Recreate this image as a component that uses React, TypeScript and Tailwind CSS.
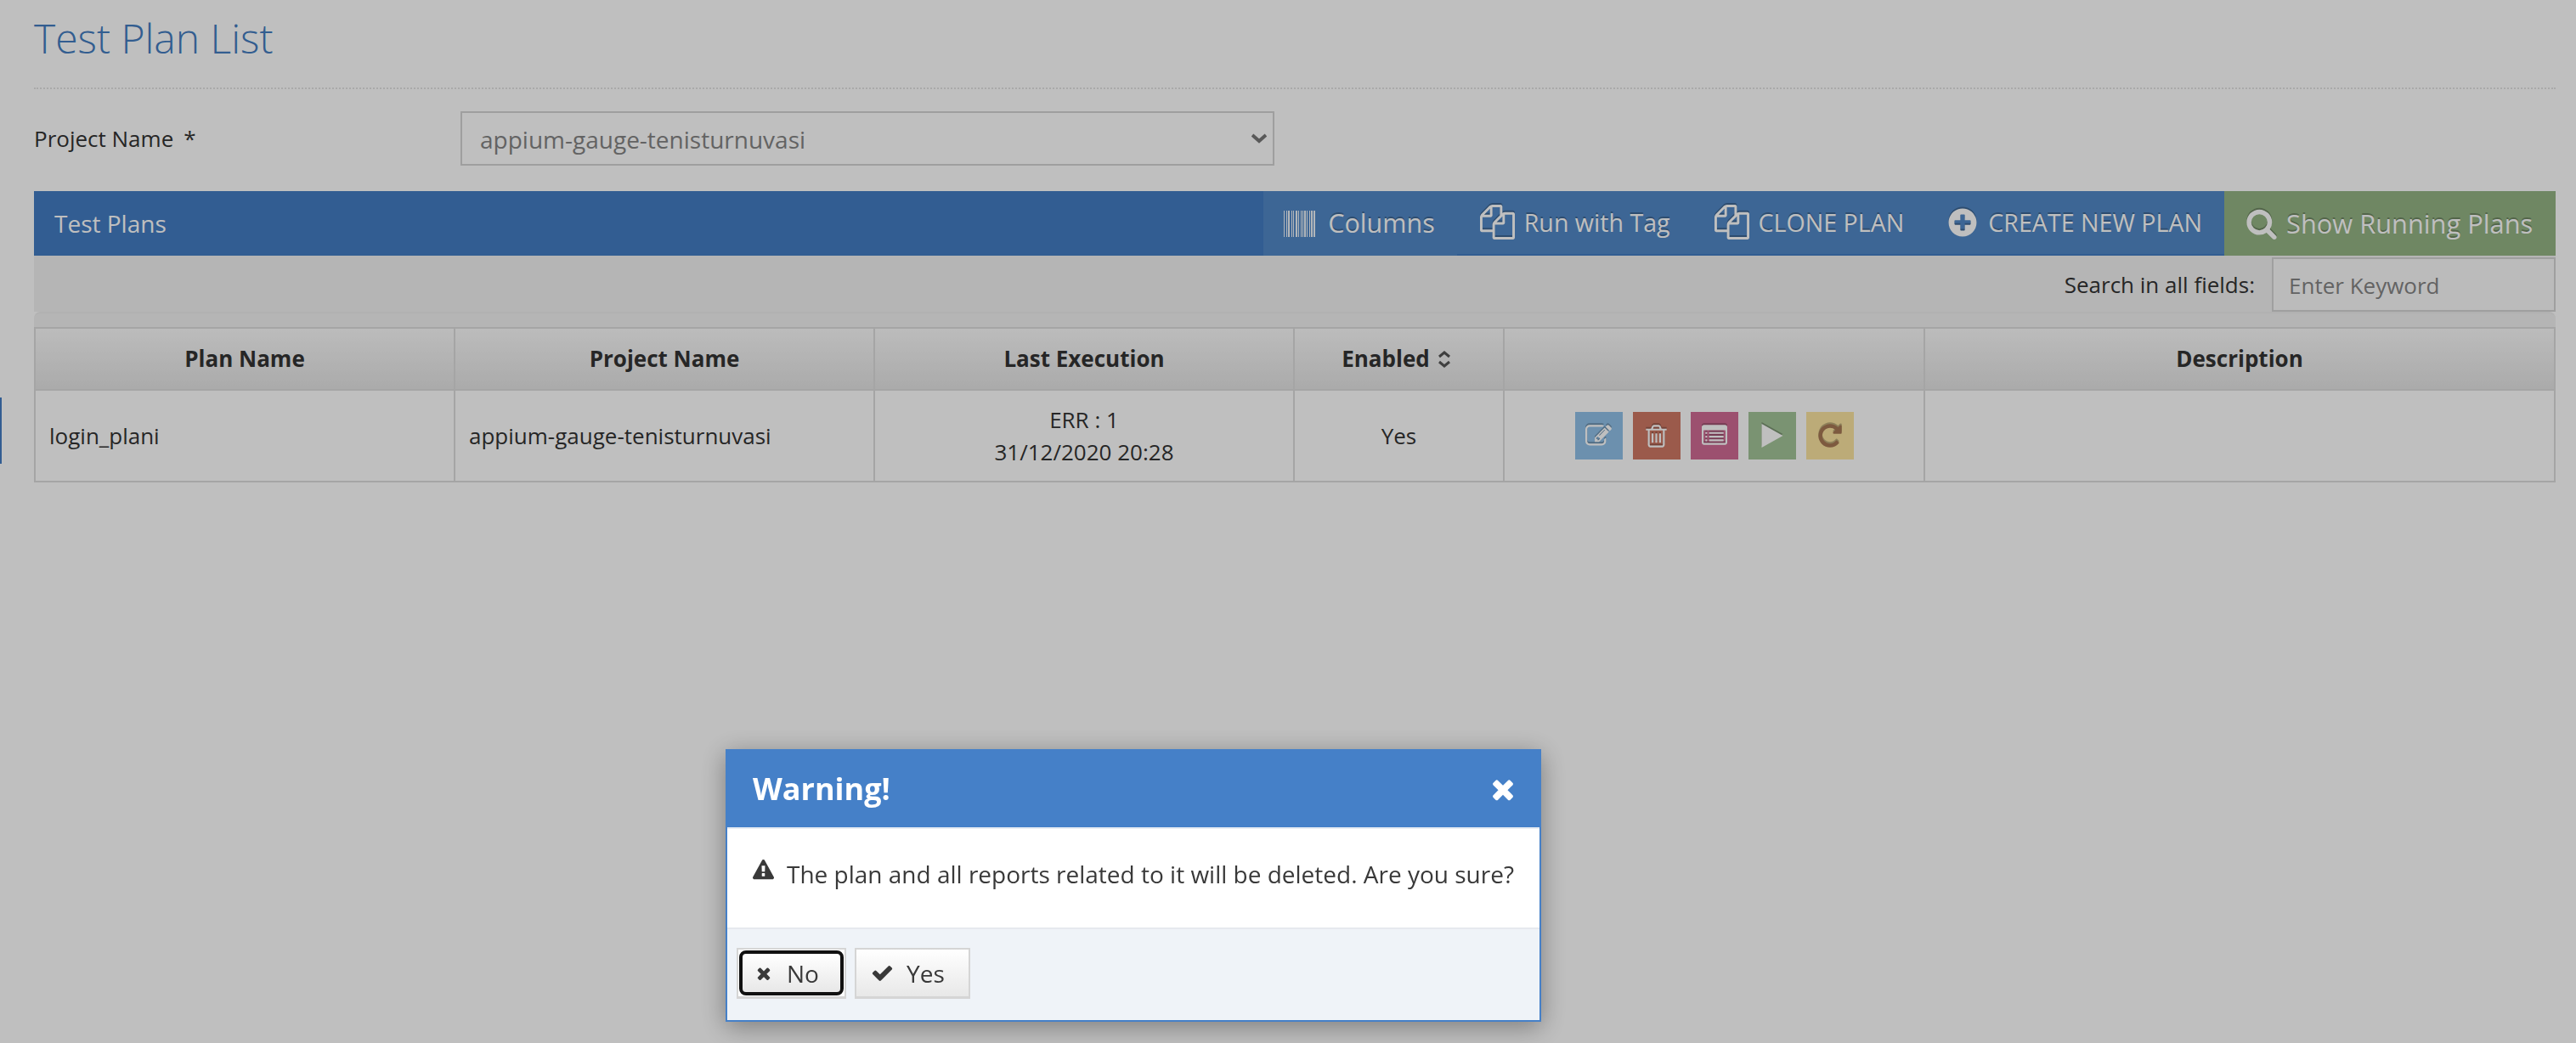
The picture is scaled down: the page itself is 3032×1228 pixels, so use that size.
import React from 'react'
import { FaPlusCircle } from 'react-icons/fa'

const FILES = 'M1696 384q40 0 68 28t28 68v1216q0 40-28 68t-68 28h-960q-40 0-68-28t-28-68v-288h-544q-40 0-68-28t-28-68v-672q0-40 20-88t48-76l408-408q28-28 76-48t88-20h416q40 0 68 28t28 68v328q68-40 128-40h416zm-544 213l-299 299h299v-299zm-640-384l-299 299h299v-299zm196 647l316-316v-416h-384v416q0 40-28 68t-68 28h-416v640h512v-256q0-40 20-88t48-76zm956 804v-1152h-384v416q0 40-28 68t-68 28h-416v640h896z'
const EDIT = 'M888 1184l116-116-152-152-116 116v56h96v96h56zm440-720q-16-16-33 1l-350 350q-17 17-1 33t33-1l350-350q17-17 1-33zm80 594v190q0 119-84.5 203.5t-203.5 84.5h-832q-119 0-203.5-84.5t-84.5-203.5v-832q0-119 84.5-203.5t203.5-84.5h832q63 0 117 25 15 7 18 23 3 17-9 29l-49 49q-14 14-32 8-23-6-45-6h-832q-66 0-113 47t-47 113v832q0 66 47 113t113 47h832q66 0 113-47t47-113v-126q0-13 9-22l64-64q15-15 35-7t20 29zm-96-738l288 288-672 672h-288v-288zm444 132l-92 92-288-288 92-92q28-28 68-28t68 28l152 152q28 28 28 68t-28 68z'
const TRASH = 'M704 736v576q0 14-9 23t-23 9h-64q-14 0-23-9t-9-23v-576q0-14 9-23t23-9h64q14 0 23 9t9 23zm256 0v576q0 14-9 23t-23 9h-64q-14 0-23-9t-9-23v-576q0-14 9-23t23-9h64q14 0 23 9t9 23zm256 0v576q0 14-9 23t-23 9h-64q-14 0-23-9t-9-23v-576q0-14 9-23t23-9h64q14 0 23 9t9 23zm128 724v-948h-896v948q0 22 7 40.5t14.5 27 10.5 8.5h832q3 0 10.5-8.5t14.5-27 7-40.5zm-672-1076h448l-48-117q-7-9-17-11h-317q-10 2-17 11zm928 32v64q0 14-9 23t-23 9h-96v948q0 83-47 143.5t-113 60.5h-832q-66 0-113-58.5t-47-141.5v-952h-96q-14 0-23-9t-9-23v-64q0-14 9-23t23-9h309l70-167q15-37 54-63t79-26h320q40 0 79 26t54 63l70 167h309q14 0 23 9t9 23z'
const LIST = 'M384 1184v64q0 13-9.5 22.5t-22.5 9.5h-64q-13 0-22.5-9.5t-9.5-22.5v-64q0-13 9.5-22.5t22.5-9.5h64q13 0 22.5 9.5t9.5 22.5zm0-256v64q0 13-9.5 22.5t-22.5 9.5h-64q-13 0-22.5-9.5t-9.5-22.5v-64q0-13 9.5-22.5t22.5-9.5h64q13 0 22.5 9.5t9.5 22.5zm0-256v64q0 13-9.5 22.5t-22.5 9.5h-64q-13 0-22.5-9.5t-9.5-22.5v-64q0-13 9.5-22.5t22.5-9.5h64q13 0 22.5 9.5t9.5 22.5zm1152 512v64q0 13-9.5 22.5t-22.5 9.5h-960q-13 0-22.5-9.5t-9.5-22.5v-64q0-13 9.5-22.5t22.5-9.5h960q13 0 22.5 9.5t9.5 22.5zm0-256v64q0 13-9.5 22.5t-22.5 9.5h-960q-13 0-22.5-9.5t-9.5-22.5v-64q0-13 9.5-22.5t22.5-9.5h960q13 0 22.5 9.5t9.5 22.5zm0-256v64q0 13-9.5 22.5t-22.5 9.5h-960q-13 0-22.5-9.5t-9.5-22.5v-64q0-13 9.5-22.5t22.5-9.5h960q13 0 22.5 9.5t9.5 22.5zm128 704v-832q0-13-9.5-22.5t-22.5-9.5h-1472q-13 0-22.5 9.5t-9.5 22.5v832q0 13 9.5 22.5t22.5 9.5h1472q13 0 22.5-9.5t9.5-22.5zm128-1088v1088q0 66-47 113t-113 47h-1472q-66 0-113-47t-47-113v-1088q0-66 47-113t113-47h1472q66 0 113 47t47 113z'
const REPEAT = 'M1664 256v448q0 26-19 45t-45 19h-448q-42 0-59-40-17-39 14-69l138-138q-148-137-349-137-104 0-198.5 40.5t-163.5 109.5-109.5 163.5-40.5 198.5 40.5 198.5 109.5 163.5 163.5 109.5 198.5 40.5q119 0 225-52t179-147q7-10 23-12 15 0 25 9l137 138q9 8 9.5 20.5t-7.5 22.5q-109 132-264 204.5t-327 72.5q-156 0-298-61t-245-164-164-245-61-298 61-298 164-245 245-164 298-61q147 0 284.5 55.5t244.5 156.5l130-129q29-31 70-14 39 17 39 59z'
const PLAY = 'M238 158 L1555 896 L238 1634 Z'
const TIMES = 'M1490 1322q0 40-28 68l-136 136q-28 28-68 28t-68-28l-294-294-294 294q-28 28-68 28t-68-28l-136-136q-28-28-28-68t28-68l294-294-294-294q-28-28-28-68t28-68l136-136q28-28 68-28t68 28l294 294 294-294q28-28 68-28t68 28l136 136q28 28 28 68t-28 68l-294 294 294 294q28 28 28 68z'
const CHECK = 'M1671 566q0 40-28 68l-724 724-136 136q-28 28-68 28t-68-28l-136-136-362-362q-28-28-28-68t28-68l136-136q28-28 68-28t68 28l294 295 656-657q28-28 68-28t68 28l136 136q28 28 28 68z'
const WARNING = 'M1024 1375v-190q0-14-9.5-23.5t-22.5-9.5h-192q-13 0-22.5 9.5t-9.5 23.5v190q0 14 9.5 23.5t22.5 9.5h192q13 0 22.5-9.5t9.5-23.5zm-2-374l18-459q0-12-10-19-13-11-24-11h-220q-11 0-24 11-10 7-10 21l17 457q0 10 10 16.5t24 6.5h185q14 0 23.5-6.5t10.5-16.5zm-14-934l768 1408q35 63-2 126-17 29-46.5 46t-63.5 17h-1536q-34 0-63.5-17t-46.5-46q-37-63-2-126l768-1408q17-31 47-49t65-18 65 18 47 49z'
const SEARCH = 'M1216 832q0-185-131.5-316.5t-316.5-131.5-316.5 131.5-131.5 316.5 131.5 316.5 316.5 131.5 316.5-131.5 131.5-316.5zm512 832q0 52-38 90t-90 38q-54 0-90-38l-343-342q-179 124-399 124-143 0-273.5-55.5t-225-150-150-225-55.5-273.5 55.5-273.5 150-225 225-150 273.5-55.5 273.5 55.5 225 150 150 225 55.5 273.5q0 220-124 399l343 343q37 37 37 90z'

const Glyph = ({ d, size, className }: { d: string; size: number; className?: string }) => (
    <svg viewBox="0 0 1792 1792" width={size} height={size} fill="currentColor" className={className}>
        <path d={d} />
    </svg>
)

// thin stripes of the barcode, [x, width]
const stripes = [[0, 1], [3, 1], [5, 2], [9, 1], [11, 1], [14, 2], [17, 1], [20, 1], [22, 1], [24, 2], [27, 1], [30, 1], [32, 2], [35, 2]]

const Barcode = () => (
    <svg viewBox="0 0 37 31" width="37" height="31" fill="currentColor" className="opacity-90">
        {stripes.map(([x, w]) => (
            <rect key={x} x={x} y="0" width={w} height="31" />
        ))}
    </svg>
)

const iconShadow = '[filter:drop-shadow(0_-2px_0_rgba(0,0,0,0.25))]'

const ToolbarItem = ({ icon, label, gap }: { icon: React.ReactNode; label: string; gap: string }) => (
    <div className={`flex items-center ${gap} text-[28.6px] text-white [text-shadow:0_-2px_0_rgba(0,0,0,0.25)]`}>
        {icon}
        <span>{label}</span>
    </div>
)

const ActionButton = ({ color, text, d, size }: { color: string; text: string; d: string; size: number }) => (
    <div className={`flex h-[56px] w-[56px] items-center justify-center ${color} ${text}`}>
        <Glyph d={d} size={size} className={iconShadow} />
    </div>
)

const headers = ['Plan Name', 'Project Name', 'Last Execution', 'Enabled', '', 'Description']

export default function App() {
    return (
        <div className="min-h-screen bg-white pl-10 pr-[24px] font-['Open_Sans',sans-serif] text-[26px] text-[#333]">
            <h1 className="flex h-[105px] items-start border-b-2 border-dotted border-[#e2e2e2] pt-[15px] text-[48px] leading-[60px] font-light text-[#437cc0]">
                Test Plan List
            </h1>
            <div className="mt-[26px] flex h-[64px] items-start">
                <label className="w-[502px] pt-[10px] text-[26px] leading-[44px]">
                    Project Name<span className="ml-[12px]">*</span>
                </label>
                <div className="relative h-[64px] w-[958px] border-2 border-[#d5d5d5] bg-white pl-[21px] text-[28px] leading-[62px] text-[#858585]">
                    appium-gauge-tenisturnuvasi
                    <svg viewBox="0 0 18 12" width="18" height="12" className="absolute top-[24px] right-[7px]" fill="none" stroke="#777" strokeWidth="4">
                        <path d="M1 2l8 7 8-7" />
                    </svg>
                </div>
            </div>

            <div className="mt-[30px] flex h-[76px] items-stretch bg-[#437cc3]">
                <div className="flex-1 pl-6 text-[28px] leading-[76px] text-white">Test Plans</div>
                <div className="flex bg-[#5289c7]">
                    <div className="flex items-center gap-[15px] pr-[26px] pl-[24px] text-[30.5px] text-white [text-shadow:0_-2px_0_rgba(0,0,0,0.25)]">
                        <Barcode />
                        <span>Columns</span>
                    </div>
                    <div className="flex items-center gap-[52px] border-b-2 border-[#437cc3] pr-[26px] pl-[27px]">
                        <ToolbarItem icon={<Glyph d={FILES} size={41} className={iconShadow} />} label="Run with Tag" gap="gap-[11px]" />
                        <ToolbarItem icon={<Glyph d={FILES} size={41} className={iconShadow} />} label="CLONE PLAN" gap="gap-[11px]" />
                        <ToolbarItem icon={<FaPlusCircle size={34} className={iconShadow} />} label="CREATE NEW PLAN" gap="gap-[13px]" />
                    </div>
                </div>
                <div className="flex w-[390px] items-center gap-[10px] bg-[#94b584] pl-[25px] text-[30.8px] text-white [text-shadow:0_-2px_0_rgba(0,0,0,0.25)]">
                    <Glyph d={SEARCH} size={38} className={iconShadow} />
                    <span>Show Running Plans</span>
                </div>
            </div>

            <div className="flex h-[66px] items-start justify-end bg-[#f2f2f2] pt-[2px]">
                <span className="mt-[14px] mr-[20px] leading-[36px]">Search in all fields:</span>
                <div className="h-[64px] w-[334px] border-2 border-[#d5d5d5] bg-[#fafafa] pl-[18px] text-[26px] leading-[62px] text-[#858585]">
                    Enter Keyword
                </div>
            </div>
            <div className="h-[18px] rounded-t-[8px] border-t-2 border-[#ededed] bg-[#f2f2f2]"></div>

            <table className="w-full table-fixed border-collapse">
                <colgroup>
                    <col className="w-[494px]" />
                    <col className="w-[494px]" />
                    <col className="w-[494px]" />
                    <col className="w-[247px]" />
                    <col className="w-[495px]" />
                    <col />
                </colgroup>
                <thead>
                    <tr className="h-[73px]">
                        {headers.map((h, i) => (
                            <th key={i} className="border-2 border-[#dcdcdc] bg-linear-to-b from-[#fbfbfb] to-[#e4e4e4] text-center font-bold">
                                {h === 'Enabled' ? (
                                    <span className="inline-flex items-center gap-[9px] pr-[6px]">
                                        {h}
                                        <svg viewBox="0 0 16 20" width="16" height="20" fill="none" stroke="#555" strokeWidth="3">
                                            <path d="M2 7l6-5 6 5M2 13l6 5 6-5" />
                                        </svg>
                                    </span>
                                ) : (
                                    h
                                )}
                            </th>
                        ))}
                    </tr>
                </thead>
                <tbody>
                    <tr className="h-[108px]">
                        <td className="border-2 border-[#dcdcdc] px-[16px]">login_plani</td>
                        <td className="border-2 border-[#dcdcdc] px-[16px]">appium-gauge-tenisturnuvasi</td>
                        <td className="border-2 border-[#dcdcdc] px-[16px] text-center leading-[38px]">
                            ERR : 1
                            <br />
                            31/12/2020 20:28
                        </td>
                        <td className="border-2 border-[#dcdcdc] px-[16px] text-center">Yes</td>
                        <td className="border-2 border-[#dcdcdc]">
                            <div className="flex items-center justify-center gap-[12px]">
                                <ActionButton color="bg-[#90c0e8]" text="text-white" d={EDIT} size={31} />
                                <ActionButton color="bg-[#cf7864]" text="text-white" d={TRASH} size={31} />
                                <ActionButton color="bg-[#d06b94]" text="text-white" d={LIST} size={30} />
                                <ActionButton color="bg-[#a3c498]" text="text-white" d={PLAY} size={34} />
                                <ActionButton color="bg-[#fbe4a0]" text="text-[#a77954]" d={REPEAT} size={32} />
                            </div>
                        </td>
                        <td className="border-2 border-[#dcdcdc]"></td>
                    </tr>
                </tbody>
            </table>

            {/* active row marker on the page edge */}
            <div className="absolute top-[468px] left-0 h-[78px] w-[2px] bg-[#437cc3]"></div>

            {/* dialog backdrop */}
            <div className="fixed inset-0 bg-black/25"></div>

            <div className="fixed top-[882px] left-[854px] w-[960px] border-2 border-[#4580c8] bg-white shadow-[0_6px_28px_rgba(0,0,0,0.35)]">
                <div className="flex h-[90px] items-center justify-between bg-[#4580c8] pr-[25px] pl-[30px] text-white">
                    <span className="text-[36px] font-bold">Warning!</span>
                    <Glyph d={TIMES} size={36} />
                </div>
                <div className="flex h-[120px] items-start border-t-2 border-b-2 border-t-[#e8edf3] border-b-[#e6e9ee] pt-[33px] pl-[30px] text-[28px] text-[#393939]">
                    <Glyph d={WARNING} size={25} className="mt-[3px] mr-[15px] text-[#393939]" />
                    <span className="leading-[40px]">The plan and all reports related to it will be deleted. Are you sure?</span>
                </div>
                <div className="flex h-[107px] items-start gap-[10px] bg-[#eff3f8] pt-[22px] pl-[11px] text-[28px] text-[#393939]">
                    <button className="h-[60px] w-[129px] border-2 border-b-[3px] border-[#d5d5d5] bg-white p-[1px]">
                        <div className="flex h-full items-center gap-[16px] rounded-[8px] border-4 border-[#111] bg-linear-to-b from-white to-[#e8e8e8] pl-[14px]">
                            <Glyph d={TIMES} size={22} />
                            <span>No</span>
                        </div>
                    </button>
                    <button className="flex h-[60px] w-[136px] items-center gap-[15px] border-2 border-b-[3px] border-[#d5d5d5] bg-linear-to-b from-white to-[#e8e8e8] pl-[17px]">
                        <Glyph d={CHECK} size={27} />
                        <span>Yes</span>
                    </button>
                </div>
            </div>
        </div>
    )
}
